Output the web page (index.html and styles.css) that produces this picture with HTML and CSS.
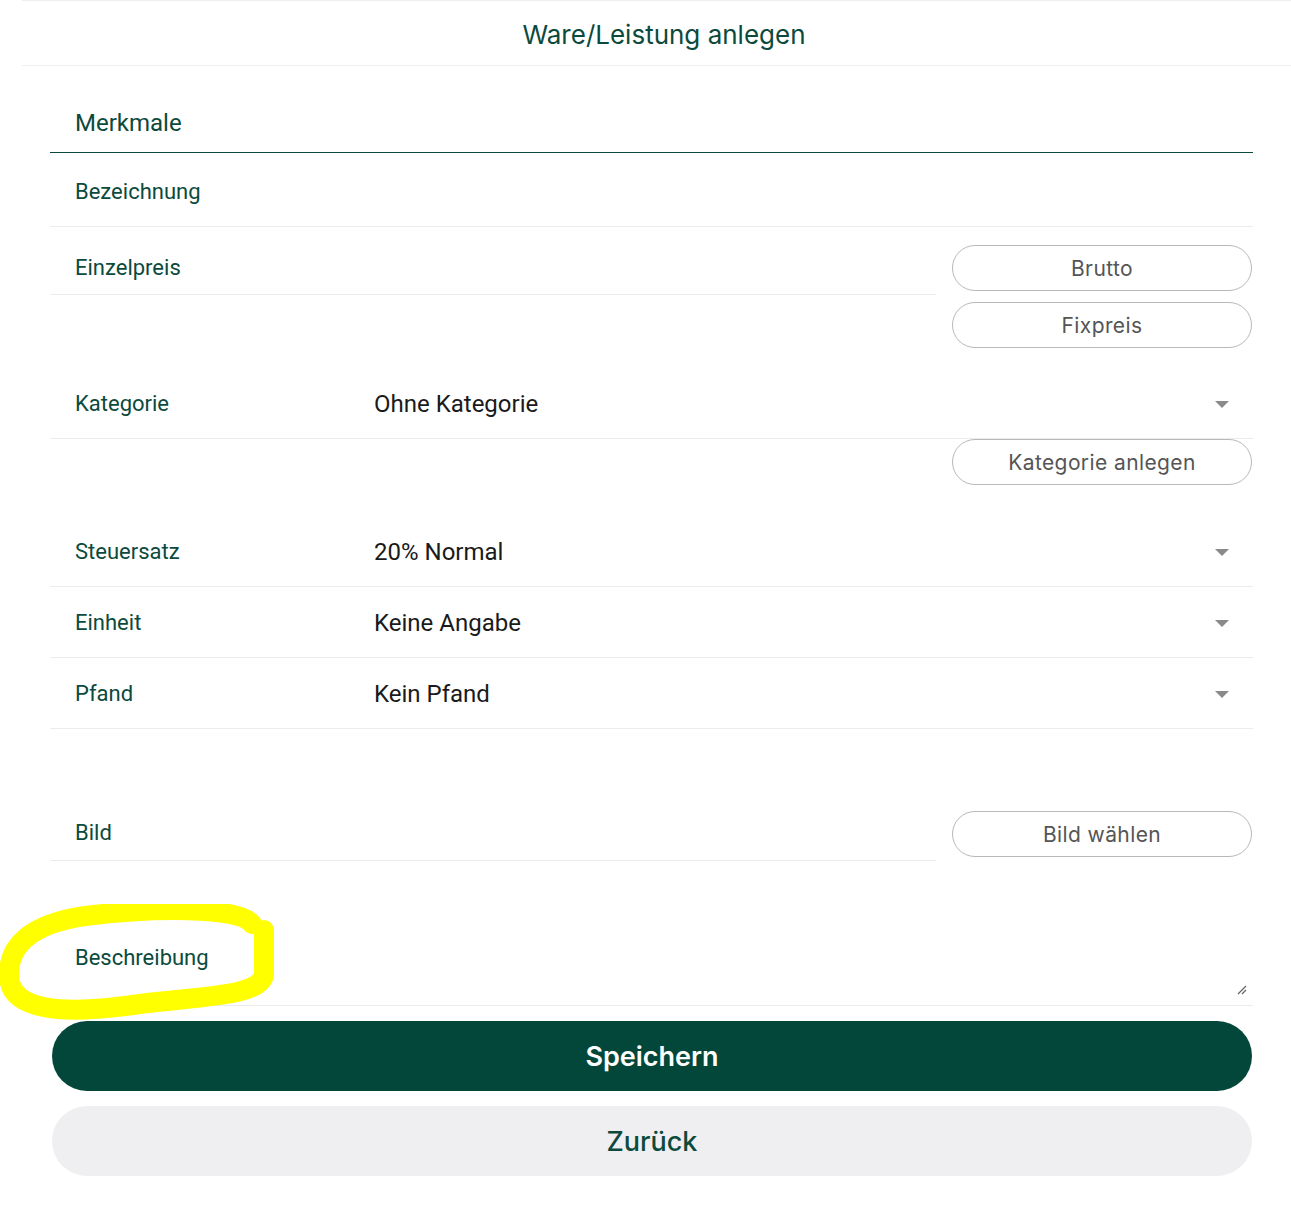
FILE: index.html
```html
<!DOCTYPE html>
<html lang="de">
<head>
    <meta charset="UTF-8">
    <meta name="viewport" content="width=device-width, initial-scale=1.0">
    <title>Ware/Leistung anlegen</title>
    <link rel="stylesheet" href="styles.css">
</head>
<body>
    <div class="page">
        <!-- Kopfzeile -->
        <div class="header">Ware/Leistung anlegen</div>

        <div class="tabs">
            <div class="tab active">Merkmale</div>
        </div>

        <div class="form">
            <div class="field">
                <span class="label">Bezeichnung</span>
            </div>

            <!-- Preis mit Umschaltern -->
            <div class="split">
                <div class="field field-price">
                    <span class="label">Einzelpreis</span>
                </div>
                <div class="side side-price">
                    <button class="btn-outline">Brutto</button>
                    <button class="btn-outline">Fixpreis</button>
                </div>
            </div>

            <div class="field select kategorie">
                <span class="label">Kategorie</span>
                <span class="value">Ohne Kategorie</span>
                <span class="arrow"></span>
            </div>
            <div class="side-right">
                <button class="btn-outline">Kategorie anlegen</button>
            </div>

            <div class="field select steuer">
                <span class="label">Steuersatz</span>
                <span class="value">20% Normal</span>
                <span class="arrow"></span>
            </div>
            <div class="field select">
                <span class="label">Einheit</span>
                <span class="value">Keine Angabe</span>
                <span class="arrow"></span>
            </div>
            <div class="field select">
                <span class="label">Pfand</span>
                <span class="value">Kein Pfand</span>
                <span class="arrow"></span>
            </div>

            <div class="split bild">
                <div class="field field-bild">
                    <span class="label">Bild</span>
                </div>
                <div class="side side-bild">
                    <button class="btn-outline">Bild wählen</button>
                </div>
            </div>

            <div class="field textarea">
                <span class="label">Beschreibung</span>
                <svg class="resize" width="10" height="10" viewBox="0 0 10 10">
                    <path d="M1 9 L9 1 M5 9 L9 5" stroke="#666" stroke-width="1.3" fill="none"/>
                </svg>
                <!-- Markierung -->
                <svg class="marker" width="290" height="130" viewBox="0 0 290 130">
                    <path d="M252 20 C240 2, 150 4, 85 12 C30 20, 8 42, 9 72 C10 106, 60 112, 140 100 C205 92, 262 92, 264 70 L264 26" stroke="#ffff00" stroke-width="20" fill="none" stroke-linecap="round" stroke-linejoin="round"/>
                </svg>
            </div>

            <div class="actions">
                <button class="btn-primary">Speichern</button>
                <button class="btn-secondary">Zurück</button>
            </div>
        </div>
    </div>
</body>
</html>
```

FILE: styles.css
```css
/* Grundlayout */
body {
    margin: 0;
    background-color: #ffffff;
    font-family: Roboto, "Liberation Sans", sans-serif;
}

.page {
    margin-left: 22px;
}

.header {
    height: 64px;
    line-height: 68px;
    text-align: center;
    border-top: 1px solid #eeeeee;
    border-bottom: 1px solid #eeeeee;
    color: #0b4a3c;
    font-family: Inter, "Open Sans", sans-serif;
    font-size: 26px;
    padding-left: 15px;
}

.tabs {
    margin: 0 38px 0 28px;
    padding-top: 26px;
    border-bottom: 1px solid #0b4a3c;
}

.tab {
    padding-left: 25px;
    height: 60px;
    line-height: 62px;
    font-size: 24px;
    color: #0b4a3c;
}

.form {
    margin: 0 38px 0 28px;
}

.field {
    display: flex;
    align-items: center;
    padding: 27px 0 22px 25px;
    border-bottom: 1px solid #ececec;
    position: relative;
}

.label {
    width: 299px;
    line-height: 24px;
    font-size: 22px;
    color: #0b4a3c;
}

.value {
    flex: 1;
    line-height: 24px;
    font-size: 24px;
    color: #1a1a1a;
}

.arrow {
    width: 0;
    height: 0;
    margin-right: 24px;
    border-left: 7px solid transparent;
    border-right: 7px solid transparent;
    border-top: 7px solid #8a8a8a;
}

.select {
    padding-top: 24px;
    padding-bottom: 22px;
}

.kategorie {
    margin-top: 20px;
}

.steuer {
    margin-top: 31px;
}

/* Zeilen mit Knöpfen rechts */
.split {
    display: flex;
    gap: 16px;
}

.split .field {
    flex: 1;
    align-self: flex-start;
}

.field-price {
    padding-top: 29px;
    padding-bottom: 14px;
}

.side {
    width: 300px;
    display: flex;
    flex-direction: column;
    gap: 11px;
    margin-right: 1px;
}

.side-price {
    padding-top: 18px;
}

.side-right {
    display: flex;
    justify-content: flex-end;
    padding-right: 1px;
}

.side-right .btn-outline {
    width: 300px;
}

.bild {
    margin-top: 68px;
}

.field-bild {
    padding-top: 24px;
    padding-bottom: 15px;
}

.side-bild {
    padding-top: 14px;
}

.textarea {
    margin-top: 59px;
    padding-top: 26px;
    padding-bottom: 35px;
}

.resize {
    position: absolute;
    right: 6px;
    bottom: 10px;
}

.marker {
    position: absolute;
    left: -50px;
    top: -16px;
    pointer-events: none;
}

.textarea .label {
    position: relative;
    z-index: 1;
}

/* Knöpfe */
button {
    font-family: Inter, "Open Sans", sans-serif;
    cursor: pointer;
}

.btn-outline {
    height: 46px;
    border: 1px solid #b8b8b8;
    border-radius: 23px;
    background-color: #ffffff;
    color: #555555;
    font-size: 21px;
    letter-spacing: 0.4px;
    padding-top: 2px;
}

.actions {
    display: flex;
    flex-direction: column;
    gap: 15px;
    padding: 15px 1px 0 2px;
}

.btn-primary,
.btn-secondary {
    height: 70px;
    border: none;
    border-radius: 35px;
    font-size: 27px;
}

.btn-primary {
    background-color: #03473b;
    color: #ffffff;
    font-weight: 600;
}

.btn-secondary {
    background-color: #efeff1;
    color: #0b4a3c;
    font-weight: 500;
}
```
